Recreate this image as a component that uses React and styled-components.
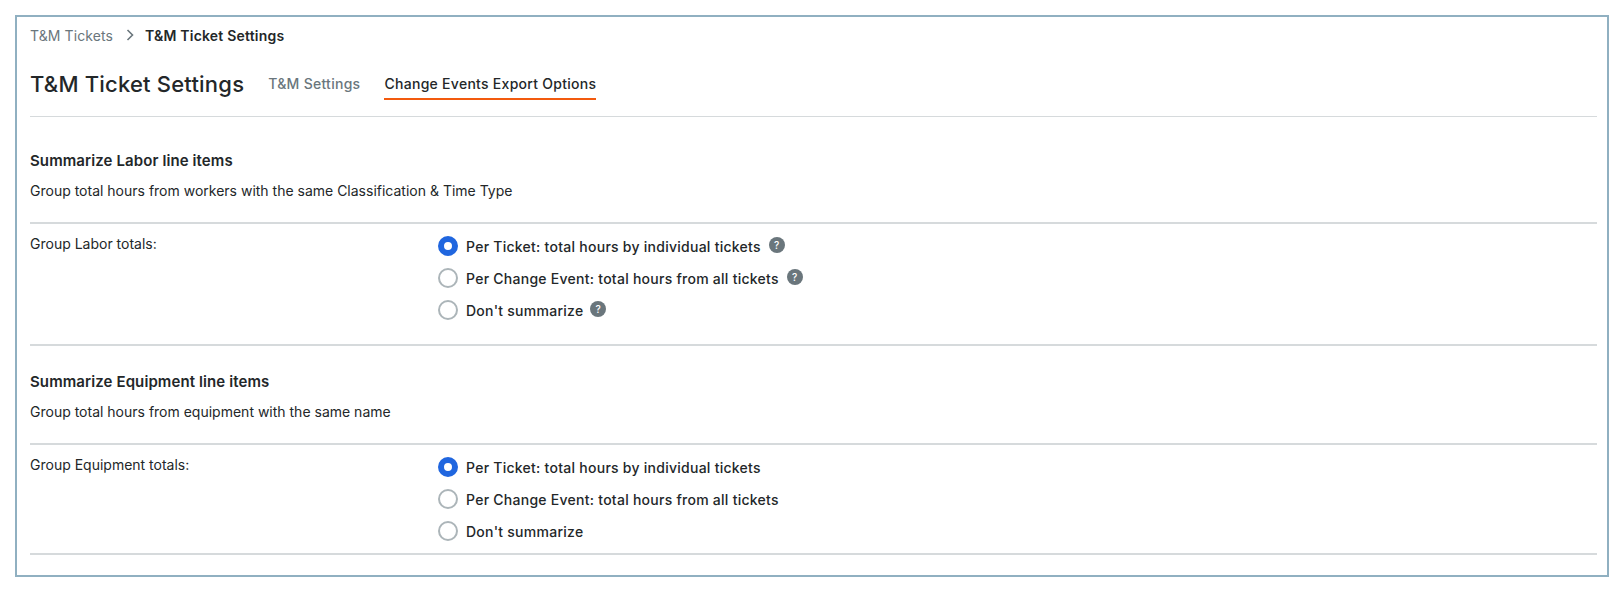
import styled, { createGlobalStyle } from 'styled-components';

const GlobalStyle = createGlobalStyle`
  html, body {
    margin: 0;
    padding: 0;
    background: #fff;
    font-family: 'Inter', 'Liberation Sans', sans-serif;
    color: #232729;
  }
`;

const Page = styled.div`
  box-sizing: border-box;
  width: 1624px;
  height: 592px;
  padding: 15px;
`;

const Frame = styled.div`
  box-sizing: border-box;
  width: 1594px;
  height: 562px;
  border: 2px solid #90b0c1;
  padding: 0 10px 0 13px;
`;

const Breadcrumbs = styled.nav`
  display: flex;
  align-items: center;
  height: 20px;
  margin-top: 8px;
  font-size: 14px;
  letter-spacing: 0.1px;
`;

const Crumb = styled.span`
  color: #6a767c;
`;

const CrumbCurrent = styled.span`
  color: #232729;
  font-weight: 600;
  letter-spacing: 0.2px;
`;

const CrumbArrow = styled.svg`
  width: 10px;
  height: 14px;
  margin: 0 10px 0 12px;
  fill: none;
  stroke: #6a767c;
  stroke-width: 1.6;
`;

const Header = styled.header`
  display: flex;
  align-items: flex-end;
  height: 72px;
  border-bottom: 1px solid #d6dadc;
  box-sizing: border-box;
`;

const Title = styled.h1`
  margin: 0 24px 16px 0;
  font-size: 22px;
  line-height: 32px;
  font-weight: 500;
  letter-spacing: 0.2px;
`;

const Tabs = styled.div`
  display: flex;
  gap: 24px;
  margin-bottom: 16px;
`;

const Tab = styled.div`
  font-size: 14px;
  line-height: 20px;
  font-weight: 500;
  letter-spacing: 0.28px;
  padding-bottom: 4px;
  color: ${(p) => (p.$active ? '#232729' : '#6a767c')};
  border-bottom: 2px solid ${(p) => (p.$active ? '#f25a0e' : 'transparent')};
`;

const Section = styled.section`
  padding-top: ${(p) => p.$top}px;
`;

const SectionTitle = styled.h2`
  margin: 0;
  font-size: 15px;
  line-height: 22px;
  font-weight: 600;
  letter-spacing: 0.1px;
`;

const SectionDesc = styled.p`
  margin: 8px 0 0;
  font-size: 14px;
  line-height: 22px;
`;

const FieldRow = styled.div`
  display: grid;
  grid-template-columns: 408px 1fr;
  margin-top: 20px;
  border-top: 2px solid #d6dadc;
  height: ${(p) => p.$height}px;
  border-bottom: 2px solid #d6dadc;
`;

const FieldLabel = styled.div`
  font-size: 14px;
  line-height: 20px;
  padding-top: 10px;
`;

const Options = styled.div`
  display: flex;
  flex-direction: column;
  gap: 12px;
  padding-top: 12px;
`;

const Option = styled.label`
  display: flex;
  align-items: center;
  height: 20px;
  font-size: 14px;
  font-weight: 500;
  letter-spacing: 0.26px;
`;

const Radio = styled.span`
  box-sizing: border-box;
  width: 20px;
  height: 20px;
  margin-right: 8px;
  border-radius: 50%;
  background: #fff;
  border: ${(p) => (p.$checked ? '6px solid #2066df' : '2px solid #acb5b9')};
`;

const Help = styled.span`
  display: flex;
  align-items: center;
  justify-content: center;
  width: 16px;
  height: 16px;
  margin: -3px 0 0 ${(p) => p.$gap}px;
  border-radius: 50%;
  background: #6a767c;
  color: #fff;
  font-size: 10px;
  font-weight: 500;
`;

const OPTIONS = [
  { label: 'Per Ticket: total hours by individual tickets', checked: true, helpGap: 8 },
  { label: 'Per Change Event: total hours from all tickets', helpGap: 8 },
  { label: "Don't summarize", helpGap: 7 },
];

const SummarySection = ({ title, desc, field, help, height, top }) => (
  <Section $top={top}>
    <SectionTitle>{title}</SectionTitle>
    <SectionDesc>{desc}</SectionDesc>
    <FieldRow $height={height}>
      <FieldLabel>{field}</FieldLabel>
      <Options>
        {OPTIONS.map((o) => (
          <Option key={o.label}>
            <Radio $checked={o.checked} />
            {o.label}
            {help && <Help $gap={o.helpGap}>?</Help>}
          </Option>
        ))}
      </Options>
    </FieldRow>
  </Section>
);

export default function App() {
  return (
    <Page>
      <GlobalStyle />
      <Frame>
        <Breadcrumbs>
          <Crumb>T&amp;M Tickets</Crumb>
          <CrumbArrow viewBox="0 0 10 14">
            <path d="M2.5 2l5 5-5 5" />
          </CrumbArrow>
          <CrumbCurrent>T&amp;M Ticket Settings</CrumbCurrent>
        </Breadcrumbs>
        <Header>
          <Title>T&amp;M Ticket Settings</Title>
          <Tabs>
            <Tab>T&amp;M Settings</Tab>
            <Tab $active>Change Events Export Options</Tab>
          </Tabs>
        </Header>
        <SummarySection
          top={33}
          title="Summarize Labor line items"
          desc="Group total hours from workers with the same Classification & Time Type"
          field="Group Labor totals:"
          height={120}
          help
        />
        <SummarySection
          top={25}
          title="Summarize Equipment line items"
          desc="Group total hours from equipment with the same name"
          field="Group Equipment totals:"
          height={108}
        />
      </Frame>
    </Page>
  );
}
